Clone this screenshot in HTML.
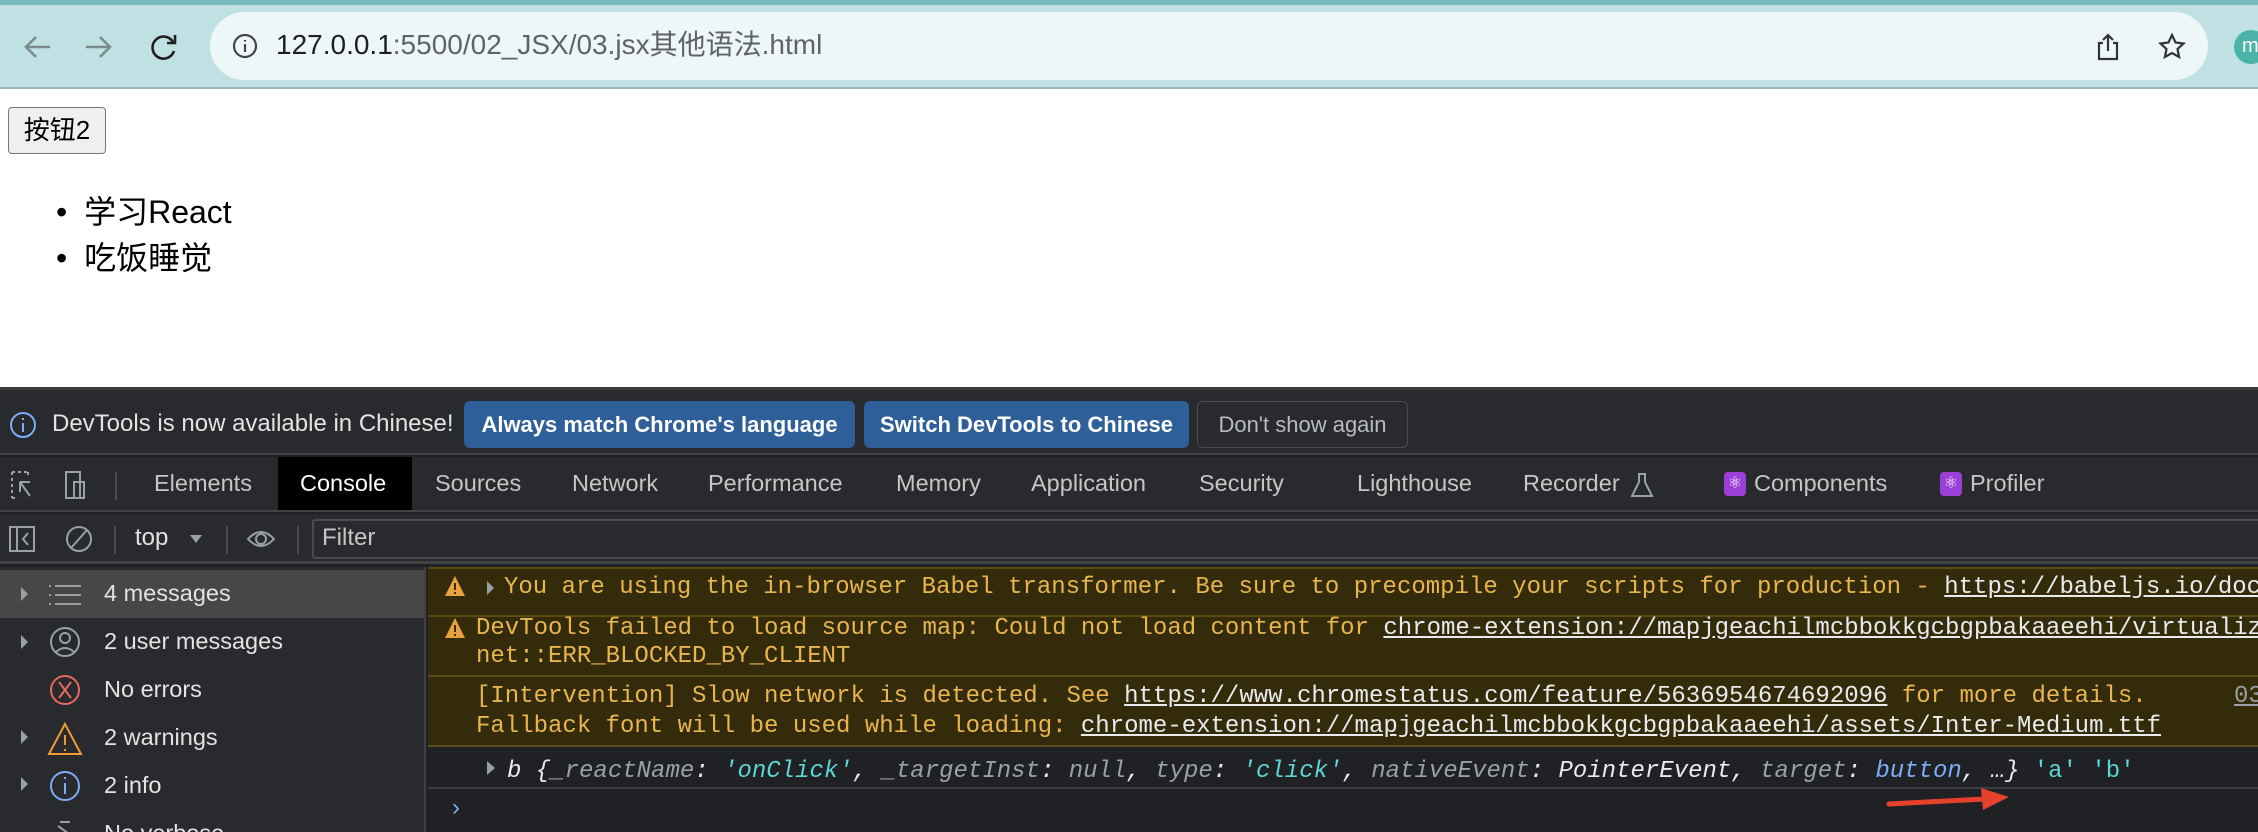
<!DOCTYPE html>
<html style="overflow:hidden"><head><meta charset="utf-8"><style>
*{margin:0;padding:0;box-sizing:border-box}
body{width:2258px;height:832px;overflow:hidden;background:#fff;font-family:"Liberation Sans","Noto Sans CJK SC",sans-serif;position:relative}
.a{position:absolute;white-space:nowrap}
.mono{font-family:"Liberation Mono","Noto Sans CJK SC",monospace;font-size:24px}
.tab{position:absolute;top:455px;height:57px;line-height:57px;font-size:23.5px;color:#c4c7c5}
.side{position:absolute;left:104px;font-size:23.5px;color:#e3e3e3}
.w{color:#e9b54f}
u{text-decoration:underline;color:#e8eaed}
</style></head><body>
<div class="a" style="left:0;top:0;width:2258px;height:89px;background:#bfe1e4;border-top:5px solid #78b8bf;border-bottom:2px solid #9fb4b7"></div>
<svg class="a" style="left:20px;top:30px" width="160" height="34" viewBox="0 0 160 34" fill="none" stroke-width="2.6">
<path d="M30 17H6M16 7L6 17l10 10" stroke="#7a8a8d"/>
<path d="M66 17h24M80 7l10 10-10 10" stroke="#7a8a8d"/>
<path d="M153 12a11 11 0 1 0 1 9" stroke="#1f1f1f"/><path d="M155 5v8h-8" stroke="#1f1f1f"/>
</svg>
<div class="a" style="left:210px;top:12px;width:1998px;height:68px;background:#eef7f8;border-radius:34px"></div>
<svg class="a" style="left:232px;top:33px" width="26" height="26" viewBox="0 0 26 26" fill="none" stroke="#444" stroke-width="2.2"><circle cx="13" cy="13" r="11"/><path d="M13 11v8M13 7v1.5"/></svg>
<div class="a" style="left:276px;top:28px;font-size:28px;line-height:34px;color:#5f6368"><span style="color:#1f1f1f">127.0.0.1</span>:5500/02_JSX/03.jsx其他语法.html</div>
<svg class="a" style="left:2094px;top:32px" width="100" height="30" viewBox="0 0 100 30" fill="none" stroke="#333" stroke-width="2.2">
<path d="M9 11H5v16h18V11h-4M14 3v16M9 8l5-5 5 5"/>
<path d="M78 3l3.5 7.5 8 1-6 5.5 1.6 8-7.1-4-7.1 4 1.6-8-6-5.5 8-1z"/>
</svg>
<div class="a" style="left:2234px;top:30px;width:34px;height:34px;border-radius:50%;background:#4bb3a8;color:#fff;font-size:20px;line-height:32px;padding-left:8px">m</div>
<div class="a" style="left:8px;top:107px;width:98px;height:47px;border:1px solid #767676;border-radius:4px;background:#efefef;font-size:26px;line-height:45px;text-align:center;color:#000">按钮2</div>
<div class="a" style="left:56px;top:189px;font-size:32px;line-height:46px;color:#000">
<div>• <span style="margin-left:8px">学习React</span></div><div>• <span style="margin-left:8px">吃饭睡觉</span></div></div>
<div class="a" style="left:0;top:387px;width:2258px;height:445px;background:#202124;border-top:3px solid #3c3c3c"></div>
<div class="a" style="left:0;top:390px;width:2258px;height:65px;background:#292a2d;border-bottom:2px solid #3f4145"></div>
<svg class="a" style="left:9px;top:411px" width="28" height="28" viewBox="0 0 28 28" fill="none" stroke="#7cacf8" stroke-width="2"><circle cx="14" cy="14" r="12"/><path d="M14 12v9M14 7v2"/></svg>
<div class="a" style="left:52px;top:410px;font-size:24px;line-height:28px;color:#e3e3e3">DevTools is now available in Chinese!</div>
<div class="a" style="left:464px;top:401px;width:391px;height:47px;background:#2e5f98;border-radius:6px;color:#fff;font-size:22px;line-height:47px;text-align:center;font-weight:bold">Always match Chrome's language</div>
<div class="a" style="left:864px;top:401px;width:325px;height:47px;background:#2e5f98;border-radius:6px;color:#fff;font-size:22px;line-height:47px;text-align:center;font-weight:bold">Switch DevTools to Chinese</div>
<div class="a" style="left:1197px;top:401px;width:211px;height:47px;border:1px solid #4a4c50;border-radius:6px;color:#b8bbbe;font-size:22px;line-height:45px;text-align:center">Don't show again</div>
<div class="a" style="left:0;top:457px;width:2258px;height:55px;background:#292a2d;border-bottom:2px solid #3f4145"></div>
<svg class="a" style="left:10px;top:470px" width="110" height="32" viewBox="0 0 110 32" fill="none" stroke="#9aa0a6" stroke-width="2">
<path d="M2 2h16M2 2v26M2 28h6M18 2v6" stroke-dasharray="3 3"/><path d="M10 12l10 14M10 12v10M10 12h10"/>
<rect x="56" y="2" width="14" height="26"/><rect x="64" y="12" width="10" height="16"/><path d="M106 2v28" stroke="#4a4c50"/></svg>
<div class="a" style="left:278px;top:457px;width:134px;height:53px;background:#000"></div>
<div class="tab" style="left:154px">Elements</div>
<div class="tab" style="left:300px;color:#fff">Console</div>
<div class="tab" style="left:435px">Sources</div>
<div class="tab" style="left:572px">Network</div>
<div class="tab" style="left:708px">Performance</div>
<div class="tab" style="left:896px">Memory</div>
<div class="tab" style="left:1031px">Application</div>
<div class="tab" style="left:1199px">Security</div>
<div class="tab" style="left:1357px">Lighthouse</div>
<div class="tab" style="left:1523px">Recorder</div>
<svg class="a" style="left:1630px;top:472px" width="24" height="26" viewBox="0 0 24 26" fill="none" stroke="#9aa0a6" stroke-width="2"><path d="M8 2h8M9 2v8L2 24h20L15 10V2"/></svg>
<div class="a" style="left:1724px;top:472px;width:22px;height:24px;background:#9b3fd6;border-radius:4px;color:#fff;font-size:16px;line-height:24px;text-align:center">⚛</div>
<div class="tab" style="left:1754px">Components</div>
<div class="a" style="left:1940px;top:472px;width:22px;height:24px;background:#9b3fd6;border-radius:4px;color:#fff;font-size:16px;line-height:24px;text-align:center">⚛</div>
<div class="tab" style="left:1970px">Profiler</div>
<div class="a" style="left:0;top:514px;width:2258px;height:50px;background:#292a2d;border-bottom:3px solid #3f4145"></div>
<svg class="a" style="left:8px;top:522px" width="300" height="34" viewBox="0 0 300 34" fill="none" stroke="#9aa0a6" stroke-width="2">
<rect x="2" y="5" width="24" height="24"/><path d="M9 5v24M20 11l-5 6 5 6"/>
<circle cx="71" cy="17" r="12"/><path d="M63 26l16-18"/>
<path d="M107 4v28M219 4v28M290 4v28" stroke="#4a4c50"/>
<path d="M182 13h12l-6 8z" fill="#9aa0a6" stroke="none"/>
<path d="M240 17q13-14 26 0q-13 14-26 0z"/><circle cx="253" cy="17" r="5"/>
</svg>
<div class="a" style="left:135px;top:523px;font-size:24px;line-height:30px;color:#e3e3e3">top</div>
<div class="a" style="left:312px;top:519px;width:1960px;height:40px;border:2px solid #4a4c50;border-right:none;border-radius:3px 0 0 3px"></div>
<div class="a" style="left:322px;top:523px;font-size:24px;line-height:30px;color:#c4c7c5">Filter</div>
<div class="a" style="left:0;top:567px;width:426px;height:265px;background:#282a2e;border-right:2px solid #3f4145"></div>
<div class="a" style="left:0;top:570px;width:424px;height:48px;background:#474747"></div>
<svg class="a" style="left:0;top:570px" width="100" height="262" viewBox="0 0 100 262" fill="none" stroke-width="2">
<g fill="#9aa0a6" stroke="none"><path d="M21 17l7 7-7 7z"/><path d="M21 65l7 7-7 7z"/><path d="M21 160l7 7-7 7z"/><path d="M21 207l7 7-7 7z"/></g>
<path d="M55 16h26M55 25h26M55 34h26M49 16h2M49 25h2M49 34h2" stroke="#9aa0a6"/>
<circle cx="65" cy="72" r="14" stroke="#9aa0a6"/><circle cx="65" cy="68" r="5" stroke="#9aa0a6"/><path d="M56 82q9-8 18 0" stroke="#9aa0a6"/>
<circle cx="65" cy="120" r="14" stroke="#e46962"/><path d="M59 112l12 16M71 112l-12 16" stroke="#e46962"/>
<path d="M65 154l-16 30h32z" stroke="#f09a35"/><path d="M65 165v10M65 179v2" stroke="#f09a35"/>
<circle cx="65" cy="216" r="14" stroke="#7cacf8"/><path d="M65 213v11M65 207v2" stroke="#7cacf8"/>
<path d="M60 252l10 0M58 256l14 10" stroke="#9aa0a6"/>
</svg>
<div class="side" style="top:580px">4 messages</div>
<div class="side" style="top:628px">2 user messages</div>
<div class="side" style="top:676px">No errors</div>
<div class="side" style="top:724px">2 warnings</div>
<div class="side" style="top:772px">2 info</div>
<div class="side" style="top:820px">No verbose</div>
<div class="a" style="left:428px;top:567px;width:1830px;height:50px;background:#332b0a;border-top:2px solid #5c4b12;border-bottom:2px solid #5c4b12"></div>
<div class="a" style="left:428px;top:617px;width:1830px;height:60px;background:#332b0a;border-bottom:2px solid #5c4b12"></div>
<div class="a" style="left:428px;top:677px;width:1830px;height:70px;background:#332b0a;border-bottom:2px solid #5c4b12"></div>
<div class="a" style="left:428px;top:787px;width:1830px;height:2px;background:#3c3d40"></div>
<svg class="a" style="left:444px;top:575px" width="60" height="24" viewBox="0 0 60 24">
<path d="M11 1L1 21h20z" fill="#e9a23b"/><path d="M11 8v7M11 17v2" stroke="#332b0a" stroke-width="2"/>
<path d="M43 6l7 7-7 7z" fill="#9aa0a6"/></svg>
<svg class="a" style="left:444px;top:617px" width="24" height="22" viewBox="0 0 24 22"><path d="M11 1L1 21h20z" fill="#e9a23b"/><path d="M11 8v7M11 17v2" stroke="#332b0a" stroke-width="2"/></svg>
<div class="a mono w" style="left:504px;top:574px;line-height:28px">You are using the in-browser Babel transformer. Be sure to precompile your scripts for production - <u>https://babeljs.io/docs/en/babel-standalone</u></div>
<div class="a mono w" style="left:476px;top:615px;line-height:28px">DevTools failed to load source map: Could not load content for <u>chrome-extension://mapjgeachilmcbbokkgcbgpbakaaeehi/virtualized-list.js.map</u><br>net::ERR_BLOCKED_BY_CLIENT</div>
<div class="a mono w" style="left:476px;top:682px;line-height:30px">[Intervention] Slow network is detected. See <u>https://www.chromestatus.com/feature/5636954674692096</u> for more details.<br>Fallback font will be used while loading: <u>chrome-extension://mapjgeachilmcbbokkgcbgpbakaaeehi/assets/Inter-Medium.ttf</u></div>
<div class="a mono" style="left:2234px;top:682px;line-height:30px;color:#9aa0a6;text-decoration:underline;width:24px;overflow:hidden">03</div>
<svg class="a" style="left:486px;top:760px" width="12" height="16"><path d="M1 1l8 7-8 7z" fill="#9aa0a6"/></svg>
<div class="a mono" style="left:507px;top:757px;line-height:30px;color:#e8eaed;font-style:italic">b {<span style="color:#9aa0a6">_reactName</span>: <span style="color:#5cd5d5">'onClick'</span>, <span style="color:#9aa0a6">_targetInst</span>: <span style="color:#9aa0a6">null</span>, <span style="color:#9aa0a6">type</span>: <span style="color:#5cd5d5">'click'</span>, <span style="color:#9aa0a6">nativeEvent</span>: PointerEvent, <span style="color:#9aa0a6">target</span>: <span style="color:#7cacf8">button</span>, …} <span style="color:#5cd5d5;font-style:normal">'a' 'b'</span></div>
<div class="a" style="left:452px;top:794px;font-size:24px;color:#7cacf8">›</div>
<svg class="a" style="left:1885px;top:782px" width="130" height="30" viewBox="0 0 130 30"><path d="M4 22L100 17" stroke="#e5412d" stroke-width="5" stroke-linecap="round"/><path d="M96 6l28 9-26 13z" fill="#e5412d"/></svg>
</body></html>
